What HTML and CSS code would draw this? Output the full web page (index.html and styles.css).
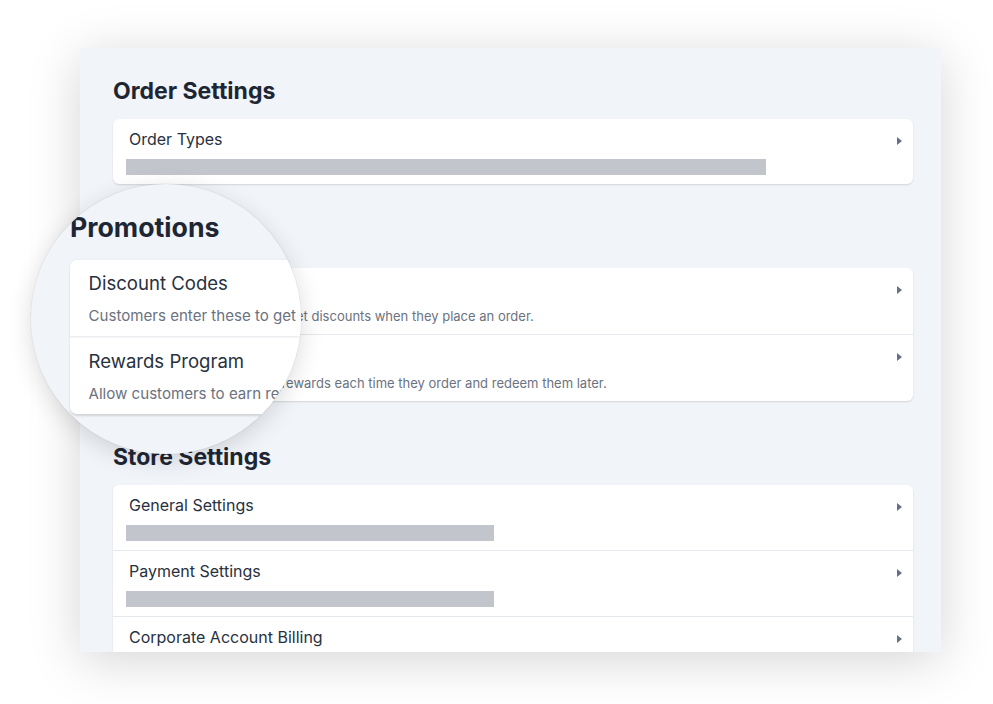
FILE: index.html
```html
<!DOCTYPE html>
<html lang="en">
<head>
    <meta charset="UTF-8">
    <meta name="viewport" content="width=device-width, initial-scale=1.0">
    <title>Settings</title>
    <link rel="stylesheet" href="styles.css">
</head>
<body>

    <div class="stage">
        <div class="panel">
            <section class="group">
                <h2>Order Settings</h2>
                <div class="card">
                    <div class="row">
                        <div class="row-body">
                            <div class="row-title">Order Types</div>
                            <div class="bar bar-long"></div>
                        </div>
                        <span class="chevron"></span>
                    </div>
                </div>
            </section>

            <section class="group">
                <h2>Promotions</h2>
                <div class="card">
                    <div class="row">
                        <div class="row-body">
                            <div class="row-title">Discount Codes</div>
                            <div class="row-desc">Customers enter these to get discounts when they place an order.</div>
                        </div>
                        <span class="chevron"></span>
                    </div>
                    <div class="row">
                        <div class="row-body">
                            <div class="row-title">Rewards Program</div>
                            <div class="row-desc">Allow customers to earn rewards each time they order and redeem them later.</div>
                        </div>
                        <span class="chevron"></span>
                    </div>
                </div>
            </section>

            <section class="group">
                <h2>Store Settings</h2>
                <div class="card">
                    <div class="row">
                        <div class="row-body">
                            <div class="row-title">General Settings</div>
                            <div class="bar"></div>
                        </div>
                        <span class="chevron"></span>
                    </div>
                    <div class="row">
                        <div class="row-body">
                            <div class="row-title">Payment Settings</div>
                            <div class="bar"></div>
                        </div>
                        <span class="chevron"></span>
                    </div>
                    <div class="row">
                        <div class="row-body">
                            <div class="row-title">Corporate Account Billing</div>
                            <div class="bar"></div>
                        </div>
                        <span class="chevron"></span>
                    </div>
                </div>
            </section>
        </div>

        <!-- magnifier over the promotions block -->
        <div class="lens">
            <div class="lens-view">
                <section class="group">
                    <h2>Promotions</h2>
                    <div class="card">
                        <div class="row">
                            <div class="row-body">
                                <div class="row-title">Discount Codes</div>
                                <div class="row-desc">Customers enter these to get discounts when they place an order.</div>
                            </div>
                        </div>
                        <div class="row">
                            <div class="row-body">
                                <div class="row-title">Rewards Program</div>
                                <div class="row-desc">Allow customers to earn rewards each time they order and redeem them later.</div>
                            </div>
                        </div>
                    </div>
                </section>
            </div>
        </div>
    </div>

</body>
</html>
```

FILE: styles.css
```css
* { margin: 0; padding: 0; box-sizing: border-box; }
body { font-family: Inter, "Noto Sans", sans-serif; background: #fff; color: #1f2937; }

.stage { position: relative; width: 993px; height: 704px; overflow: hidden; padding: 48px 0 0 80px; }

.panel {
    width: 861px;
    height: 604px;
    overflow: hidden;
    background: #f1f4f8;
    padding: 29px 28px 0 33px;
    box-shadow: 0 8px 48px rgba(0, 0, 0, 0.17);
}

.group { margin-bottom: 42px; }
.group h2 { font-size: 23px; line-height: 28px; font-weight: 700; color: #1e2634; margin-bottom: 14px; }

.card {
    background: #fff;
    border-radius: 6px;
    box-shadow: 0 1px 2px rgba(0, 0, 0, 0.13);
}

.row { display: flex; padding: 10px 11px 9px 16px; border-top: 1px solid #e5e8ec; }
.row:first-child { border-top: none; }
.row-body { flex: 1; }
.row-title { font-size: 16px; line-height: 20px; color: #283140; }
.row-desc { font-size: 13px; line-height: 18px; color: #6b7280; margin-top: 9px; }

.bar { width: 368px; height: 16px; margin: 10px 0 0 -3px; background: #c2c5cc; }
.bar-long { width: 640px; }

.chevron {
    width: 0; height: 0;
    margin-top: 8px;
    border-left: 5px solid #667185;
    border-top: 4px solid transparent;
    border-bottom: 4px solid transparent;
}

.lens {
    position: absolute;
    left: 31px; top: 184px;
    width: 270px; height: 270px;
    border-radius: 50%;
    overflow: hidden;
    background: #f1f4f8;
    box-shadow: 0 0 0 1px rgba(0, 0, 0, 0.04), 0 6px 24px rgba(0, 0, 0, 0.14);
}
.lens-view {
    width: 800px;
    margin: 27px 0 0 39px;
    transform: scale(1.16);
    transform-origin: 0 0;
}
```
